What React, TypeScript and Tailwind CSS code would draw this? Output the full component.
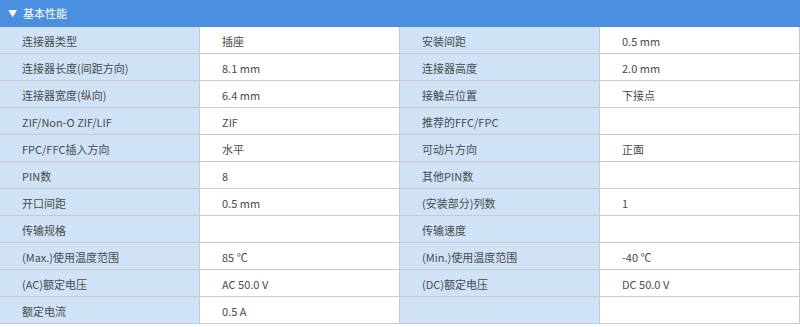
import React from 'react'

const rows: [string, string, string, string][] = [
  ['连接器类型', '插座', '安装间距', '0.5 mm'],
  ['连接器长度(间距方向)', '8.1 mm', '连接器高度', '2.0 mm'],
  ['连接器宽度(纵向)', '6.4 mm', '接触点位置', '下接点'],
  ['ZIF/Non-O ZIF/LIF', 'ZIF', '推荐的FFC/FPC', ''],
  ['FPC/FFC插入方向', '水平', '可动片方向', '正面'],
  ['PIN数', '8', '其他PIN数', ''],
  ['开口间距', '0.5 mm', '(安装部分)列数', '1'],
  ['传输规格', '', '传输速度', ''],
  ['(Max.)使用温度范围', '85 ℃', '(Min.)使用温度范围', '-40 ℃'],
  ['(AC)额定电压', 'AC 50.0 V', '(DC)额定电压', 'DC 50.0 V'],
  ['额定电流', '0.5 A', '', ''],
]

function Label({ text }: { text: string }) {
  return (
    <div className="h-[27px] flex items-center pl-[22px] pt-[2px] bg-[#cfe2f6] border-b border-r border-[#c9c9c9]">
      {text}
    </div>
  )
}

function Value({ text }: { text: string }) {
  return (
    <div className="h-[27px] flex items-center pl-[22px] pt-[2px] bg-white border-b border-r border-[#c9c9c9]">
      {text}
    </div>
  )
}

export default function App() {
  return (
    <div className="w-[800px] text-[11px] text-[#4a4a4a]" style={{ fontFamily: '"Noto Sans CJK SC", "Noto Sans", sans-serif' }}>
      <div className="h-[27px] bg-[#4a8fe0] text-white flex items-center pl-[8px] gap-[6px]">
        <span className="text-[9px]">▼</span>
        <span>基本性能</span>
      </div>
      <div className="grid grid-cols-4">
        {rows.map((r, i) => (
          <React.Fragment key={i}>
            <Label text={r[0]} />
            <Value text={r[1]} />
            <Label text={r[2]} />
            <Value text={r[3]} />
          </React.Fragment>
        ))}
      </div>
    </div>
  )
}
